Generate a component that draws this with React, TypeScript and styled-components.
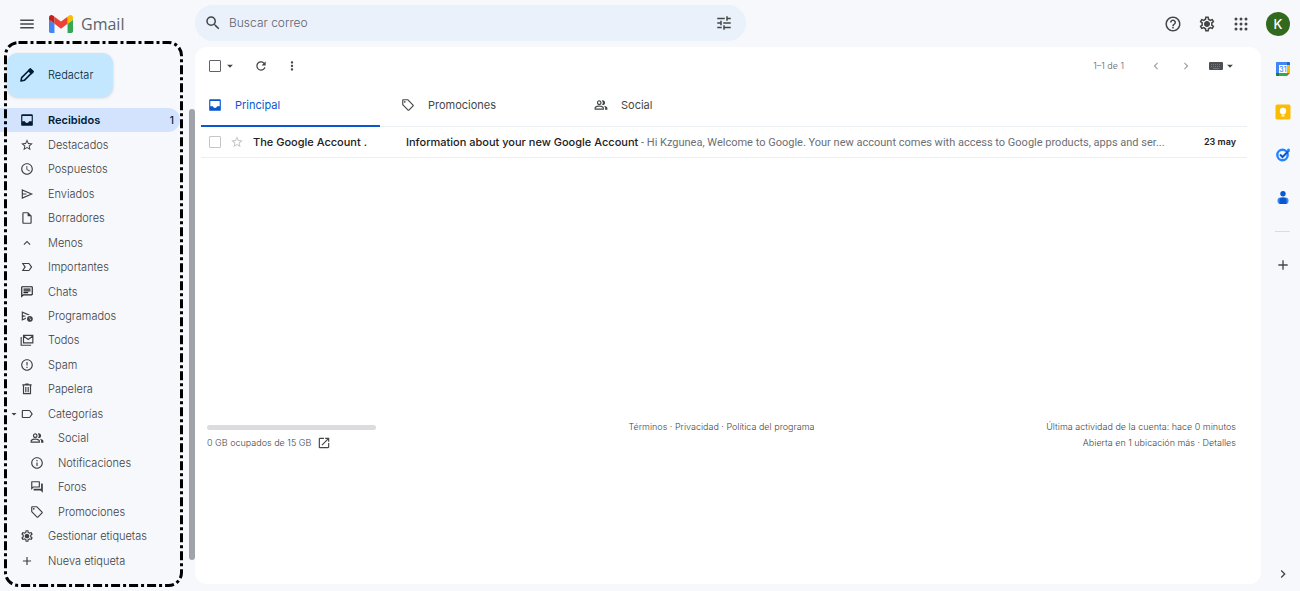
import React, { ReactNode } from 'react';
import styled, { createGlobalStyle } from 'styled-components';
import {
  MdMenu, MdSearch, MdTune, MdHelpOutline,
  MdStarBorder, MdSchedule, MdOutlineInsertDriveFile, MdKeyboardArrowUp,
  MdLabelImportantOutline, MdOutlineChat, MdOutlineScheduleSend, MdErrorOutline, MdLabelOutline,
  MdOutlinePeopleAlt, MdInfoOutline, MdOutlineForum, MdOutlineSell, MdAdd, MdRefresh, MdMoreVert,
  MdChevronLeft, MdChevronRight, MdArrowDropDown, MdOpenInNew, MdOutlineSettings,
} from 'react-icons/md';

const GlobalStyle = createGlobalStyle`
  * { box-sizing: border-box; }
  body { margin: 0; background: #f6f8fc; color: #444746; font: 300 11px/16px Inter, "Liberation Sans", sans-serif; }
  button { border: 0; padding: 0; background: none; font: inherit; color: inherit; cursor: pointer; }
  a { color: inherit; text-decoration: none; }
  svg { display: block; flex: none; }
`;

const Page = styled.div`
  min-height: 100vh;
  display: flex;
  flex-direction: column;
  background: #f6f8fc;
`;
const TopBar = styled.header`
  display: flex;
  align-items: center;
  height: 47px;
  padding-right: 10px;
`;
const Brand = styled.div`
  width: 195px;
  flex: none;
  display: flex;
  align-items: center;
  padding-left: 18px;
`;
const Logo = styled.a`
  display: flex;
  align-items: center;
  gap: 8px;
  margin-left: 13px;
  font: 16px/24px "Open Sans", Inter, sans-serif;
  color: #5f6368;
`;
const SearchBox = styled.form`
  display: flex;
  align-items: center;
  flex: 0 1 551px;
  height: 36px;
  padding: 0 13px 0 9px;
  margin-bottom: 1px;
  border-radius: 18px;
  background: #eaf1fb;
`;
const SearchInput = styled.input`
  flex: 1;
  min-width: 0;
  margin-left: 7px;
  padding: 0;
  border: 0;
  outline: 0;
  background: none;
  font: 300 12px/16px Inter, sans-serif;
  color: #444746;
  &::placeholder { color: #5f6368; opacity: 1; }
`;
const IconButton = styled.button<{ $tone?: string }>`
  display: flex;
  align-items: center;
  justify-content: center;
  color: ${(p) => p.$tone ?? '#444746'};
`;
const TopActions = styled.div`
  display: flex;
  align-items: center;
  gap: 16px;
  margin-left: auto;
`;
const Avatar = styled.button`
  width: 24px;
  height: 24px;
  border-radius: 50%;
  background: #33691e;
  color: #fff;
  font-size: 13px;
  font-weight: 500;
`;
const Body = styled.div`
  flex: 1;
  display: flex;
`;
const Sidebar = styled.aside`
  position: relative;
  display: flex;
  flex-direction: column;
  width: 189px;
  flex: none;
  padding: 6px 0 18px;
`;
const Outline = styled.svg`
  position: absolute;
  left: 4px;
  top: -6px;
  width: 180px;
  height: 546px;
  pointer-events: none;
`;
const Compose = styled.button`
  display: flex;
  align-items: center;
  gap: 13px;
  height: 44px;
  width: 106px;
  margin-left: 7px;
  padding-left: 12px;
  border-radius: 11px;
  background: #c2e7ff;
  color: #001d35;
  box-shadow: 0 1px 3px rgba(60, 64, 67, 0.2);
`;
const NavList = styled.ul`
  flex: 1;
  display: grid;
  grid-auto-rows: minmax(24px, 1fr);
  list-style: none;
  margin: 11px 0 0;
  padding: 0;
`;
const NavItem = styled.li`
  display: flex;
`;
const NavLink = styled.a<{ $active?: boolean; $indent: number }>`
  display: flex;
  align-items: center;
  flex: 1;
  margin-right: 9px;
  padding: 0 6px 0 ${(p) => p.$indent}px;
  border-radius: 0 12px 12px 0;
  background: ${(p) => (p.$active ? '#d3e3fd' : 'transparent')};
  color: ${(p) => (p.$active ? '#001d35' : '#3c4043')};
  font-weight: ${(p) => (p.$active ? 600 : 300)};
`;
const NavLabel = styled.span`
  flex: 1;
  margin-left: 14px;
`;
const Count = styled.span`
  font-size: 10px;
  font-weight: 500;
`;
const Scrollbar = styled.div`
  width: 6px;
  flex: none;
  margin: 62px 0 31px;
  border-radius: 3px;
  background: #a0a4a8;
`;
const Panel = styled.main`
  flex: 1;
  min-width: 0;
  margin-bottom: 7px;
  padding: 0 14px 0 6px;
  border-radius: 12px;
  background: #fff;
`;
const Toolbar = styled.div`
  display: flex;
  align-items: center;
  height: 38px;
  padding: 0 10px 0 8px;
`;
const Group = styled.div<{ $gap: number; $end?: boolean }>`
  display: flex;
  align-items: center;
  gap: ${(p) => p.$gap}px;
  margin-left: ${(p) => (p.$end ? 'auto' : '0')};
`;
const Check = styled.input<{ $faint?: boolean }>`
  appearance: none;
  width: 12px;
  height: 12px;
  flex: none;
  margin: 0;
  border: ${(p) => (p.$faint ? '1px solid #c4c7c5' : '1px solid #5f6368')};
  border-radius: 1px;
`;
const Range = styled.span`
  margin-right: 9px;
  font-size: 9px;
  color: #5f6368;
`;
const Tabs = styled.div`
  display: flex;
  height: 42px;
  border-bottom: 1px solid #eceff1;
`;
const Tab = styled.button<{ $active?: boolean }>`
  display: flex;
  align-items: center;
  gap: 13px;
  width: ${(p) => (p.$active ? 179 : 193)}px;
  height: 42px;
  margin-right: ${(p) => (p.$active ? 14 : 0)}px;
  padding-left: 7px;
  border-bottom: 2px solid ${(p) => (p.$active ? '#0b57d0' : 'transparent')};
  color: ${(p) => (p.$active ? '#0b57d0' : '#444746')};
  font-weight: 400;
`;
const Mail = styled.div`
  display: flex;
  align-items: center;
  height: 31px;
  padding: 0 11px 0 8px;
  border-bottom: 1px solid #eceff1;
`;
const Sender = styled.span`
  width: 153px;
  flex: none;
  font-weight: 500;
  color: #202124;
`;
const Subject = styled.a`
  flex: 1;
  min-width: 0;
  overflow: hidden;
  white-space: nowrap;
  text-overflow: ellipsis;
  font-family: Roboto, Inter, sans-serif;
  font-weight: 400;
  color: #6b6f74;
  strong { font-family: Inter, sans-serif; font-weight: 500; color: #202124; }
`;
const MailDate = styled.time`
  margin-left: 16px;
  font-size: 9px;
  font-weight: 600;
  color: #202124;
`;
const Footer = styled.footer`
  display: grid;
  grid-template-columns: 1fr 1fr 1fr;
  margin-top: 261px;
  padding: 0 11px 0 6px;
  font-size: 9px;
  color: #444746;
`;
const FooterCell = styled.div<{ $align: string }>`
  text-align: ${(p) => p.$align};
`;
const StorageBar = styled.div`
  width: 169px;
  height: 5px;
  margin: 6px 0 5px;
  border-radius: 3px;
  background: #dadce0;
`;
const SidePanel = styled.aside`
  width: 39px;
  flex: none;
  display: flex;
  flex-direction: column;
  align-items: center;
  padding: 14px 0 9px 4px;
`;
const Apps = styled.div`
  display: flex;
  flex-direction: column;
  gap: 27px;
`;
const Divider = styled.hr`
  width: 15px;
  margin: 25px 0;
  border: 0;
  border-top: 1px solid #dadce0;
`;
const Spacer = styled.div`
  flex: 1;
`;

const GmailMark = () => (
  <svg width="24" height="18" viewBox="52 42 88 66" aria-hidden="true">
    <path fill="#4285f4" d="M58 108h14V74L52 59v43c0 3.32 2.69 6 6 6" />
    <path fill="#34a853" d="M120 108h14c3.32 0 6-2.69 6-6V59l-20 15" />
    <path fill="#fbbc04" d="M120 48v26l20-15v-8c0-7.42-8.47-11.65-14.4-7.2" />
    <path fill="#ea4335" d="M72 74V48l24 18 24-18v26L96 92" />
    <path fill="#c5221f" d="M52 51v8l20 15V48l-5.6-4.2c-5.94-4.45-14.4-.22-14.4 7.2" />
  </svg>
);
const AppsGrid = () => (
  <svg width="18" height="18" viewBox="0 0 18 18" fill="currentColor" aria-hidden="true">
    {[4, 9, 14].map((y) => [4, 9, 14].map((x) => <circle key={`${x}-${y}`} cx={x} cy={y} r="1.500" />))}
  </svg>
);
const InboxIcon = () => (
  <svg width="14" height="14" viewBox="0 0 24 24" aria-hidden="true">
    <path fill="currentColor" fillRule="evenodd" d="M4 2h16a2 2 0 0 1 2 2v16a2 2 0 0 1-2 2H4a2 2 0 0 1-2-2V4a2 2 0 0 1 2-2zm0 3v9h4.500c.5 1.800 1.800 3 3.500 3s3-1.200 3.500-3H20V5z" />
  </svg>
);
const GearIcon = ({ size }: { size: number }) => (
  <svg width={size} height={size} viewBox="0 0 24 24" aria-hidden="true">
    <MdOutlineSettings size={24} />
    <circle cx="12" cy="12" r="3.200" fill="currentColor" />
  </svg>
);
const PencilIcon = () => (
  <svg width="16" height="16" viewBox="0 0 24 24" fill="none" stroke="currentColor" strokeWidth="2.400" strokeLinejoin="round" aria-hidden="true">
    <path d="M3 21l1-5L17 3l4 4L8 20z" />
    <path d="M14.500 5.500L17 3l4 4-2.500 2.500z" fill="currentColor" />
  </svg>
);
const SendIcon = () => (
  <svg width="14" height="14" viewBox="0 0 24 24" fill="none" stroke="currentColor" strokeWidth="2" aria-hidden="true">
    <path d="M4 5l16 7-16 7zM4 12h7" />
  </svg>
);
const AllMailIcon = () => (
  <svg width="14" height="14" viewBox="0 0 24 24" fill="none" stroke="currentColor" strokeWidth="2" aria-hidden="true">
    <path d="M6 4h16v13H6zM6 5l8 6 8-6M2 7v14h17" />
  </svg>
);
const TrashIcon = () => (
  <svg width="14" height="14" viewBox="0 0 24 24" fill="none" stroke="currentColor" strokeWidth="2" aria-hidden="true">
    <path d="M6 6v14h12V6M4 5h16M9 3.500h6M10 8.500v9M14 8.500v9" />
  </svg>
);
const KeyboardIcon = () => (
  <svg width="14" height="8" viewBox="0 0 14 8" aria-hidden="true">
    <rect width="14" height="8" rx="1" fill="#4d5052" />
    <path d="M2 2.500h10M2 4.500h10" stroke="#74777a" strokeDasharray="1 1" />
    <path d="M4 6.500h6" stroke="#74777a" />
  </svg>
);
const CalendarIcon = () => (
  <svg width="16" height="16" viewBox="0 0 16 16" aria-hidden="true">
    <path fill="#4285f4" d="M1.500 1H12v3H4v8H1V1.500z" />
    <path fill="#1967d2" d="M12 1h2.500l.5.500V4h-3z" />
    <path fill="#fbbc04" d="M12 4h3v8h-3z" />
    <path fill="#34a853" d="M4 12h8v3H4z" />
    <path fill="#188038" d="M1 12h3v3H1.500l-.5-.500z" />
    <path fill="#ea4335" d="M12 12h3l-3 3z" />
    <path fill="#fff" d="M4 4h8v8H4z" />
    <text x="8" y="10.500" textAnchor="middle" fontSize="7" fontWeight="500" fill="#4285f4">31</text>
  </svg>
);
const KeepIcon = () => (
  <svg width="16" height="16" viewBox="0 0 16 16" aria-hidden="true">
    <rect x=".5" y=".5" width="15" height="15" rx="1.500" fill="#fbbc04" />
    <circle cx="8" cy="7" r="3.200" fill="#fff" />
    <path d="M6.500 9h3v1.500h-3zM6.500 11.200h3v1.300h-3z" fill="#fff" />
  </svg>
);
const TasksIcon = () => (
  <svg width="16" height="16" viewBox="0 0 16 16" fill="none" aria-hidden="true">
    <circle cx="7.500" cy="8" r="5.200" stroke="#2684fc" strokeWidth="2.400" />
    <path d="M5 7.500l2.500 2.500L14 3.500" stroke="#0b57d0" strokeWidth="2" />
    <circle cx="13.500" cy="3" r="1.500" fill="#2684fc" />
  </svg>
);
const ContactsIcon = () => (
  <svg width="16" height="16" viewBox="0 0 16 16" aria-hidden="true">
    <circle cx="8" cy="3.700" r="2.700" fill="#0b57d0" />
    <rect x="2.500" y="7.500" width="11" height="6.500" rx="3" fill="#4285f4" />
    <path d="M4.500 10.500a3 3 0 0 1 3-3h1a3 3 0 0 1 3 3v3.500h-7z" fill="#0b57d0" />
  </svg>
);

type Item = { label: string; icon: ReactNode; active?: boolean; nested?: boolean; count?: number; open?: boolean };
const s = 14;
const items: Item[] = [
  { label: 'Recibidos', icon: <InboxIcon />, active: true, count: 1 },
  { label: 'Destacados', icon: <MdStarBorder size={s} /> },
  { label: 'Pospuestos', icon: <MdSchedule size={s} /> },
  { label: 'Enviados', icon: <SendIcon /> },
  { label: 'Borradores', icon: <MdOutlineInsertDriveFile size={s} /> },
  { label: 'Menos', icon: <MdKeyboardArrowUp size={s} /> },
  { label: 'Importantes', icon: <MdLabelImportantOutline size={s} /> },
  { label: 'Chats', icon: <MdOutlineChat size={s} color="#202124" /> },
  { label: 'Programados', icon: <MdOutlineScheduleSend size={s} /> },
  { label: 'Todos', icon: <AllMailIcon /> },
  { label: 'Spam', icon: <MdErrorOutline size={s} /> },
  { label: 'Papelera', icon: <TrashIcon /> },
  { label: 'Categorías', icon: <MdLabelOutline size={s} />, open: true },
  { label: 'Social', icon: <MdOutlinePeopleAlt size={s} />, nested: true },
  { label: 'Notificaciones', icon: <MdInfoOutline size={s} />, nested: true },
  { label: 'Foros', icon: <MdOutlineForum size={s} />, nested: true },
  { label: 'Promociones', icon: <MdOutlineSell size={s} />, nested: true },
  { label: 'Gestionar etiquetas', icon: <GearIcon size={s} /> },
  { label: 'Nueva etiqueta', icon: <MdAdd size={s} /> },
];

const indentOf = (i: Item) => (i.open ? 8 : i.nested ? 30 : 20);

export default function App() {
  return (
    <Page>
      <GlobalStyle />
      <TopBar>
        <Brand>
          <IconButton aria-label="Menú principal"><MdMenu size={18} /></IconButton>
          <Logo href="#"><GmailMark />Gmail</Logo>
        </Brand>
        <SearchBox role="search">
          <IconButton type="button" aria-label="Buscar"><MdSearch size={18} /></IconButton>
          <SearchInput aria-label="Buscar correo" placeholder="Buscar correo" />
          <IconButton type="button" aria-label="Opciones de búsqueda"><MdTune size={18} /></IconButton>
        </SearchBox>
        <TopActions>
          <IconButton aria-label="Ayuda"><MdHelpOutline size={18} /></IconButton>
          <IconButton aria-label="Configuración"><GearIcon size={18} /></IconButton>
          <IconButton aria-label="Aplicaciones"><AppsGrid /></IconButton>
          <Avatar>K</Avatar>
        </TopActions>
      </TopBar>
      <Body>
        <Sidebar>
          <Compose><PencilIcon />Redactar</Compose>
          <NavList>
            {items.map((i) => (
              <NavItem key={i.label}>
                <NavLink href="#" $active={i.active} $indent={indentOf(i)}>
                  {i.open && <MdArrowDropDown size={12} />}
                  {i.icon}
                  <NavLabel>{i.label}</NavLabel>
                  {i.count && <Count>{i.count}</Count>}
                </NavLink>
              </NavItem>
            ))}
          </NavList>
          <Outline aria-hidden="true">
            <rect x="1.500" y="1.500" width="176" height="543" rx="13" fill="none" stroke="#000" strokeWidth="3" strokeDasharray="9 3 3 3" />
          </Outline>
        </Sidebar>
        <Scrollbar />
        <Panel>
          <Toolbar>
            <Group $gap={17}>
              <Group $gap={2}>
                <Check type="checkbox" aria-label="Seleccionar todo" />
                <IconButton aria-label="Seleccionar"><MdArrowDropDown size={14} /></IconButton>
              </Group>
              <IconButton aria-label="Actualizar"><MdRefresh size={14} /></IconButton>
              <IconButton aria-label="Más"><MdMoreVert size={14} /></IconButton>
            </Group>
            <Group $gap={16} $end>
              <Range>1–1 de 1</Range>
              <IconButton $tone="#9aa0a6" aria-label="Anterior"><MdChevronLeft size={14} /></IconButton>
              <IconButton $tone="#9aa0a6" aria-label="Siguiente"><MdChevronRight size={14} /></IconButton>
              <IconButton aria-label="Herramientas de introducción de texto"><KeyboardIcon /><MdArrowDropDown size={14} /></IconButton>
            </Group>
          </Toolbar>
          <Tabs>
            <Tab $active><InboxIcon />Principal</Tab>
            <Tab><MdOutlineSell size={14} />Promociones</Tab>
            <Tab><MdOutlinePeopleAlt size={14} />Social</Tab>
          </Tabs>
          <Mail>
            <Group $gap={9}>
              <Check type="checkbox" $faint aria-label="Seleccionar mensaje" />
              <IconButton $tone="#c4c7c5" aria-label="Destacar"><MdStarBorder size={14} /></IconButton>
              <Sender>The Google Account .</Sender>
            </Group>
            <Subject href="#"><strong>Information about your new Google Account</strong> - Hi Kzgunea, Welcome to Google. Your new account comes with access to Google products, apps and ser...</Subject>
            <MailDate>23 may</MailDate>
          </Mail>
          <Footer>
            <FooterCell $align="left">
              <StorageBar />
              <Group $gap={6}>0 GB ocupados de 15 GB <MdOpenInNew size={14} /></Group>
            </FooterCell>
            <FooterCell $align="center"><a href="#">Términos</a> · <a href="#">Privacidad</a> · <a href="#">Política del programa</a></FooterCell>
            <FooterCell $align="right">Última actividad de la cuenta: hace 0 minutos<br />Abierta en 1 ubicación más · <a href="#">Detalles</a></FooterCell>
          </Footer>
        </Panel>
        <SidePanel>
          <Apps>
            <IconButton aria-label="Calendar"><CalendarIcon /></IconButton>
            <IconButton aria-label="Keep"><KeepIcon /></IconButton>
            <IconButton aria-label="Tasks"><TasksIcon /></IconButton>
            <IconButton aria-label="Contactos"><ContactsIcon /></IconButton>
          </Apps>
          <Divider />
          <IconButton aria-label="Obtener complementos"><MdAdd size={16} /></IconButton>
          <Spacer />
          <IconButton aria-label="Ocultar panel"><MdChevronRight size={16} /></IconButton>
        </SidePanel>
      </Body>
    </Page>
  );
}
